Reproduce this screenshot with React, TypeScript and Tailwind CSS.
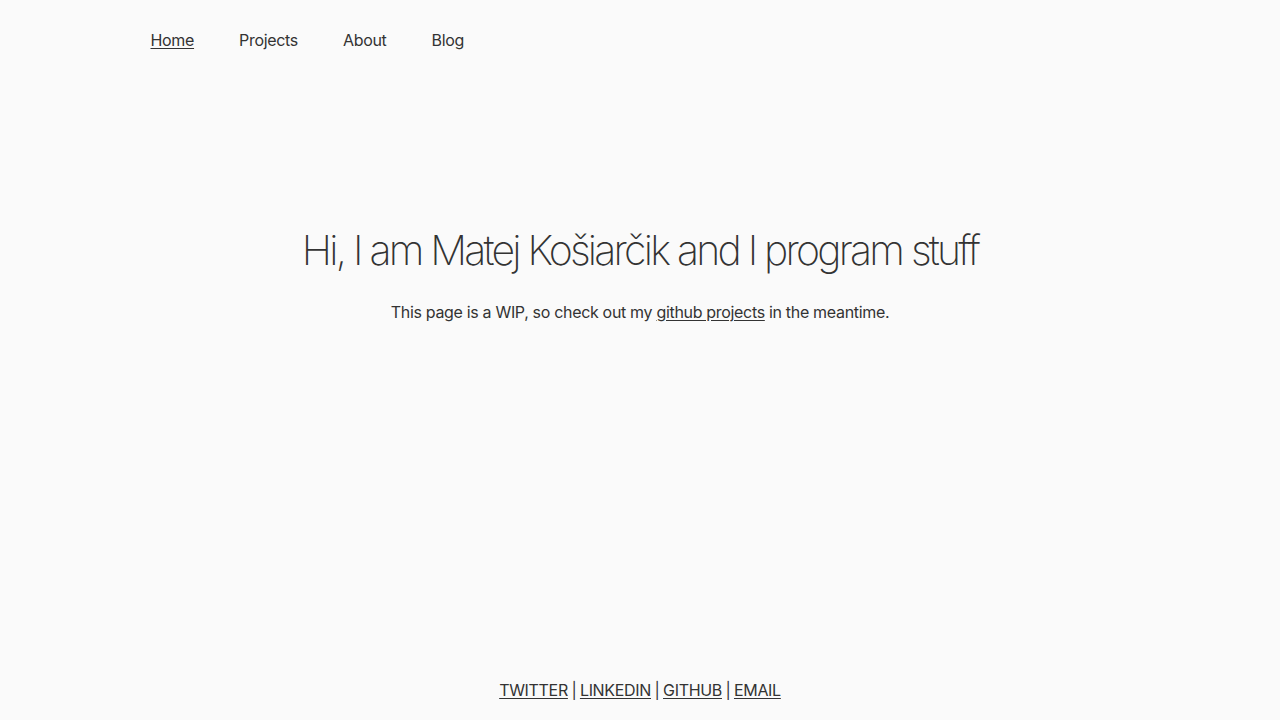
import * as React from "react";

const navItems = ["Home", "Projects", "About", "Blog"];
const links = ["TWITTER", "LINKEDIN", "GITHUB", "EMAIL"];

const App: React.FC = () => {
  return (
    <div
      className="h-screen bg-[#fafafa] text-[#333333] flex flex-col tracking-[-0.02em]"
      style={{ fontFamily: "Inter, 'Noto Sans', sans-serif" }}
    >
      {/* Top nav */}
      <nav className="flex items-center h-[80px] pl-[128px]">
        {navItems.map((item, i) => (
          <a
            key={item}
            href="#"
            className={`px-[22.5px] text-[16px] ${i === 0 ? "underline underline-offset-2" : ""}`}
          >
            {item}
          </a>
        ))}
      </nav>

      {/* Hero */}
      <main className="flex-1 flex flex-col items-center pt-[144px]">
        <h1 className="text-[41px] font-[150] tracking-[-0.068em] leading-[52px]">
          Hi, I am Matej Košiarčik and I program stuff
        </h1>
        <p className="mt-[24px] text-[16px]">
          This page is a WIP, so check out my{" "}
          <a href="#" className="underline underline-offset-2">
            github projects
          </a>{" "}
          in the meantime.
        </p>
      </main>

      {/* Footer */}
      <footer className="flex justify-center items-center h-[60px] text-[16px]">
        {links.map((l, i) => (
          <React.Fragment key={l}>
            {i > 0 && <span className="px-[3.5px]">|</span>}
            <a href="#" className="underline underline-offset-2">
              {l}
            </a>
          </React.Fragment>
        ))}
      </footer>
    </div>
  );
};

export default App;
